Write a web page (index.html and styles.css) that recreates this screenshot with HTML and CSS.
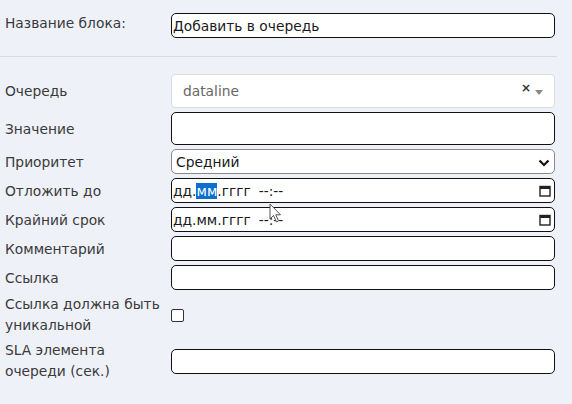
FILE: index.html
```html
<!DOCTYPE html>
<html lang="ru">
<head>
<meta charset="utf-8">
<link rel="stylesheet" href="styles.css">
</head>
<body>
<div class="page">
  <div class="row row-title">
    <div class="label">Название блока:</div>
    <div class="field input"><span class="val">Добавить в очередь</span></div>
  </div>
  <div class="sep"></div>
  <div class="form">
    <div class="label">Очередь</div>
    <div class="field select2">
      <span class="s2-text">dataline</span>
      <span class="s2-clear">×</span>
      <span class="s2-arrow"></span>
    </div>

    <div class="label">Значение</div>
    <div class="field input tall"></div>

    <div class="label">Приоритет</div>
    <div class="field select">
      <span class="sel-text">Средний</span>
      <svg class="chev" width="12" height="8" viewBox="0 0 12 8"><path d="M1.5 1.5 L6 6 L10.5 1.5" fill="none" stroke="#111" stroke-width="2.2"/></svg>
    </div>

    <div class="label">Отложить до</div>
    <div class="field input date">
      <span class="val">дд.<span class="hl">мм</span>.гггг<span class="time">--:--</span></span>
      <svg class="cal" width="12" height="12" viewBox="0 0 12 12"><rect x="1" y="1.5" width="10" height="9.5" fill="none" stroke="#222" stroke-width="1.4"/><rect x="1" y="1.5" width="10" height="2.5" fill="#222"/></svg>
    </div>

    <div class="label">Крайний срок</div>
    <div class="field input date">
      <span class="val">дд.мм.гггг<span class="time">--:--</span></span>
      <svg class="cal" width="12" height="12" viewBox="0 0 12 12"><rect x="1" y="1.5" width="10" height="9.5" fill="none" stroke="#222" stroke-width="1.4"/><rect x="1" y="1.5" width="10" height="2.5" fill="#222"/></svg>
    </div>

    <div class="label">Комментарий</div>
    <div class="field input"></div>

    <div class="label">Ссылка</div>
    <div class="field input"></div>

    <div class="label two">Ссылка должна быть<br>уникальной</div>
    <div class="checkbox-cell"><span class="checkbox"></span></div>

    <div class="label two">SLA элемента<br>очереди (сек.)</div>
    <div class="field input"></div>
  </div>
  <svg class="cursor" width="14" height="22" viewBox="0 0 14 22"><path d="M1 1 L1 16 L4.5 12.5 L7.5 19 L9.5 18 L6.8 11.8 L11.5 11.8 Z" fill="#fff" stroke="#555" stroke-width="1"/></svg>
</div>
</body>
</html>
```

FILE: styles.css
```css
* { box-sizing: border-box; }
html, body { margin: 0; padding: 0; }
body {
  background: #eef1f8;
  font-family: "DejaVu Sans", sans-serif;
  font-size: 13.8px;
  color: #333;
  width: 572px;
  height: 404px;
  overflow: hidden;
}
.page { position: relative; padding-top: 13px; }
.row {
  display: grid;
  grid-template-columns: 171px 384px;
  align-items: center;
}
.row-title { padding-bottom: 18px; }
.row-title .label { margin-top: -5px; }
.label {
  padding-left: 5px;
  line-height: 20px;
  color: #3a3a3a;
  white-space: nowrap;
}
.label.two { line-height: 21px; }
.sep {
  width: 557px;
  height: 1px;
  background: #d9dbe2;
  margin-bottom: 17px;
}
.form {
  display: grid;
  grid-template-columns: 171px 384px;
  row-gap: 4px;
  align-items: center;
}
.field {
  height: 25px;
  background: #fff;
  display: flex;
  align-items: center;
  position: relative;
}
.input {
  border: 1px solid #111;
  border-radius: 5px;
  padding-left: 1px;
}
.input.tall { height: 33px; }
.val { color: #1a1a1a; white-space: nowrap; }
.hl { background: #0a6fcf; color: #fff; }
.time { margin-left: 8px; }
.cal { position: absolute; right: 3px; top: 6px; }
.select {
  border: 1px solid #8a8a8a;
  border-radius: 5px;
  padding-left: 4px;
}
.sel-text { color: #1a1a1a; }
.chev { position: absolute; right: 4px; top: 9px; }
.select2 {
  height: 34px;
  border: 1px solid #dcdcdc;
  border-radius: 4px;
  padding-left: 11px;
}
.s2-text { color: #666; }
.s2-clear {
  position: absolute;
  right: 23px;
  top: 6px;
  font-weight: bold;
  font-size: 12px;
  color: #333;
}
.s2-arrow {
  position: absolute;
  right: 11px;
  top: 15px;
  width: 0;
  height: 0;
  border-left: 4px solid transparent;
  border-right: 4px solid transparent;
  border-top: 5px solid #888;
}
.checkbox-cell { display: flex; align-items: center; height: 42px; }
.checkbox {
  width: 13px;
  height: 13px;
  border: 1px solid #333;
  border-radius: 2px;
  background: #fff;
}
.cursor { position: absolute; left: 269px; top: 203px; }
```
